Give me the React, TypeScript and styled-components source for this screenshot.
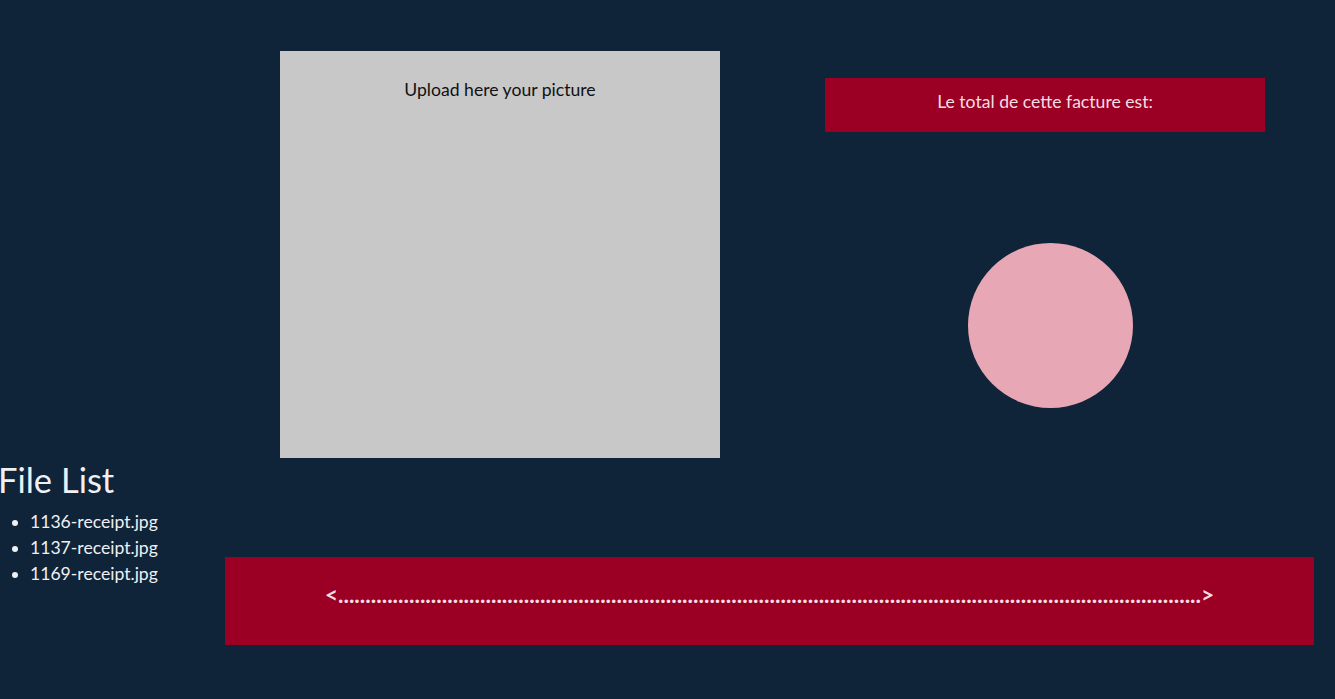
import React from "react";
import styled, { createGlobalStyle } from "styled-components";

const Global = createGlobalStyle`
  html, body { margin: 0; padding: 0; }
  body {
    background: #0f2339;
    font-family: Lato, "Open Sans", sans-serif;
    overflow: hidden;
  }
`;

const Page = styled.div`
  width: 1335px;
  height: 699px;
  display: flex;
  flex-direction: column;
`;

const TopRow = styled.div`
  display: flex;
  padding: 51px 0 0 280px;
  gap: 105px;
`;

const UploadBox = styled.div`
  width: 440px;
  height: 407px;
  background: #c8c8c8;
  box-sizing: border-box;
  padding-top: 28px;
  text-align: center;
  font-size: 17.6px;
  color: #111;
`;

const RightColumn = styled.div`
  width: 440px;
  display: flex;
  flex-direction: column;
`;

const TotalBanner = styled.div`
  margin-top: 27px;
  height: 54px;
  box-sizing: border-box;
  padding-top: 13px;
  background: #9b0024;
  color: #f6dde2;
  text-align: center;
  font-size: 17.6px;
`;

const Circle = styled.div`
  margin: 111px 0 0 143px;
  width: 165px;
  height: 165px;
  border-radius: 50%;
  background: #e8a7b4;
`;

const BottomRow = styled.div`
  display: flex;
`;

const FileAside = styled.div`
  width: 225px;
  color: #eef0f4;
`;

const Heading = styled.h1`
  margin: 1px 0 0 -2px;
  font-size: 34.5px;
  font-weight: 400;
  line-height: 1.2;
`;

const FileList = styled.ul`
  margin: 9px 0 0;
  padding-left: 30px;
  font-size: 17.6px;
  line-height: 26px;
`;

const NavBar = styled.div`
  margin: 99px 21px 0 0;
  flex: 1;
  height: 88px;
  background: #9b0024;
  display: flex;
  align-items: center;
  justify-content: center;
  color: #f6dde2;
  font-size: 23px;
  font-weight: 700;
  white-space: nowrap;
  overflow: hidden;
  padding-bottom: 14px;
  box-sizing: border-box;
`;

const files = ["1136-receipt.jpg", "1137-receipt.jpg", "1169-receipt.jpg"];

export default function App() {
  return (
    <>
      <Global />
      <Page>
        <TopRow>
          <UploadBox>Upload here your picture</UploadBox>
          <RightColumn>
            <TotalBanner>Le total de cette facture est:</TotalBanner>
            <Circle />
          </RightColumn>
        </TopRow>
        <BottomRow>
          <FileAside>
            <Heading>File List</Heading>
            <FileList>
              {files.map((f) => (
                <li key={f}>{f}</li>
              ))}
            </FileList>
          </FileAside>
          <NavBar>{"<" + ".".repeat(158) + ">"}</NavBar>
        </BottomRow>
      </Page>
    </>
  );
}
